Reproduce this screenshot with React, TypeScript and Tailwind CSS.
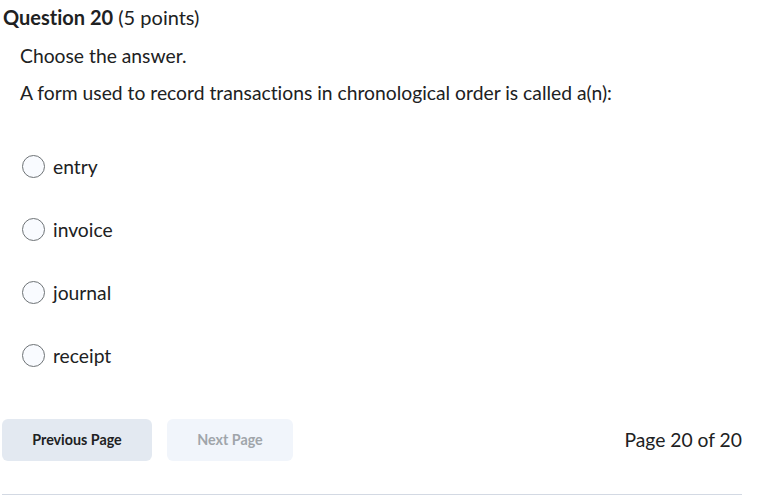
import React from "react";

const options = ["entry", "invoice", "journal", "receipt"];

export default function App() {
  return (
    <div className="w-[769px] h-[503px] bg-white overflow-hidden text-[#202122] [font-variant-ligatures:none]" style={{ fontFamily: "Lato, 'Open Sans', sans-serif" }}>
      <div className="pl-[3px] pt-[5px]">
        <h2 className="text-[20px] leading-[24px] m-0">
          <span className="font-bold">Question 20</span> <span className="font-normal">(5 points)</span>
        </h2>
      </div>
      <div className="pl-[20px] pt-[15px]">
        <p className="text-[19.3px] leading-[24px]">Choose the answer.</p>
        <p className="text-[19.3px] leading-[24px] mt-[13px]">A form used to record transactions in chronological order is called a(n):</p>
      </div>
      <div className="pl-[22px] pt-[50px] flex flex-col gap-[40px]">
        {options.map((o) => (
          <label key={o} className="flex items-center gap-[8px] h-[23px]">
            <span className="w-[23px] h-[23px] rounded-full border border-[#6e7376] bg-[#f9fbff] shrink-0" />
            <span className="text-[19.3px] leading-[24px]">{o}</span>
          </label>
        ))}
      </div>
      <div className="flex items-center justify-between pl-[2px] pr-[27px] mt-[52px]">
        <div className="flex gap-[15px]">
          <button className="w-[150px] h-[42px] rounded-[6px] bg-[#e3e9f1] text-[14.3px] font-bold text-[#202122]">Previous Page</button>
          <button className="w-[126px] h-[42px] rounded-[6px] bg-[#f1f5fb] text-[14.3px] font-bold text-[#a0a5aa]">Next Page</button>
        </div>
        <div className="text-[19.3px] leading-[24px] text-[#202122]">Page 20 of 20</div>
      </div>
      <div className="ml-[2px] mr-[27px] mt-[33px] border-t border-[#d3d9e3]" />
    </div>
  );
}
